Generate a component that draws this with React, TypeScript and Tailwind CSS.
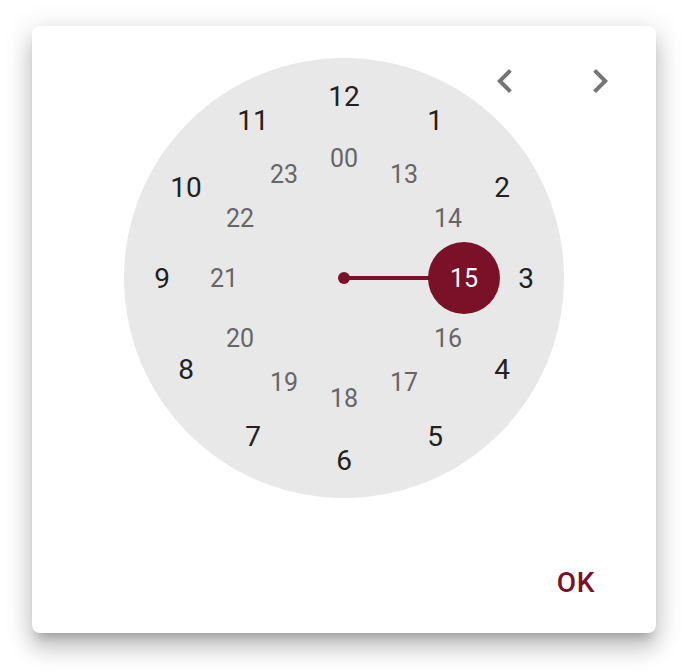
import React from "react";

const ACCENT = "#7b1029";
const OUTER_R = 182;
const INNER_R = 120;

type Num = { label: string; x: number; y: number; inner: boolean };

function place(index: number, inner: boolean) {
  const angle = ((index % 12) / 12) * Math.PI * 2 - Math.PI / 2;
  const len = inner ? INNER_R : OUTER_R;
  return {
    x: Math.round(Math.cos(angle) * len),
    y: Math.round(Math.sin(angle) * len),
  };
}

const numbers: Num[] = [
  ...Array.from({ length: 12 }, (_, i) => ({
    label: i === 0 ? "12" : String(i),
    inner: false,
    ...place(i, false),
  })),
  ...Array.from({ length: 12 }, (_, i) => ({
    label: i === 0 ? "00" : String(i + 12),
    inner: true,
    ...place(i, true),
  })),
];

const SELECTED = "15";

function ChevronLeft() {
  return (
    <svg width="48" height="48" viewBox="0 0 24 24" fill="#757575">
      <path d="M15.41 7.41 14 6l-6 6 6 6 1.41-1.41L10.83 12z" />
    </svg>
  );
}

function ChevronRight() {
  return (
    <svg width="48" height="48" viewBox="0 0 24 24" fill="#757575">
      <path d="M10 6 8.59 7.41 13.17 12l-4.58 4.59L10 18l6-6z" />
    </svg>
  );
}

function Clock() {
  return (
    <div className="relative mx-auto h-[440px] w-[440px] shrink-0 rounded-full bg-[#e8e8e8]">
      {/* pointer, thumb and centre pin */}
      <svg
        className="absolute inset-0"
        width="440"
        height="440"
        viewBox="0 0 440 440"
      >
        <line x1="220" y1="220" x2="340" y2="220" stroke={ACCENT} strokeWidth="4" />
        <circle cx="340" cy="220" r="36" fill={ACCENT} />
        <circle cx="220" cy="220" r="6" fill={ACCENT} />
      </svg>
      {numbers.map((n) => {
        const selected = n.label === SELECTED;
        return (
          <span
            key={n.label}
            className={
              "absolute flex h-[72px] w-[72px] items-center justify-center " +
              (n.inner ? "text-[25px] " : "text-[28px] ") +
              (selected
                ? "text-white"
                : n.inner
                ? "text-[#666666]"
                : "text-[#212121]")
            }
            style={{ left: 220 + n.x - 36, top: 220 + n.y - 35 }}
          >
            {n.label}
          </span>
        );
      })}
    </div>
  );
}

export default function App() {
  return (
    <div
      className="min-h-[672px] w-[688px] bg-white pl-[32px] pt-[26px]"
      style={{ fontFamily: "Roboto, 'Liberation Sans', sans-serif" }}
    >
      <div className="relative flex h-[607px] w-[624px] flex-col rounded-lg bg-white pt-[32px] shadow-[0_10px_10px_-6px_rgba(0,0,0,0.2),0_16px_20px_2px_rgba(0,0,0,0.14),0_6px_28px_4px_rgba(0,0,0,0.12)]">
        <Clock />
        <div className="absolute right-[32px] top-[31px] flex gap-[47px]">
          <button type="button" className="flex">
            <ChevronLeft />
          </button>
          <button type="button" className="flex">
            <ChevronRight />
          </button>
        </div>
        <div className="mt-auto flex justify-end p-4">
          <button
            type="button"
            className="flex h-[72px] min-w-[128px] items-center justify-center px-4 pt-[3px] text-[28px] font-medium tracking-[0.8px] text-[#7b1029]"
          >
            OK
          </button>
        </div>
      </div>
    </div>
  );
}
